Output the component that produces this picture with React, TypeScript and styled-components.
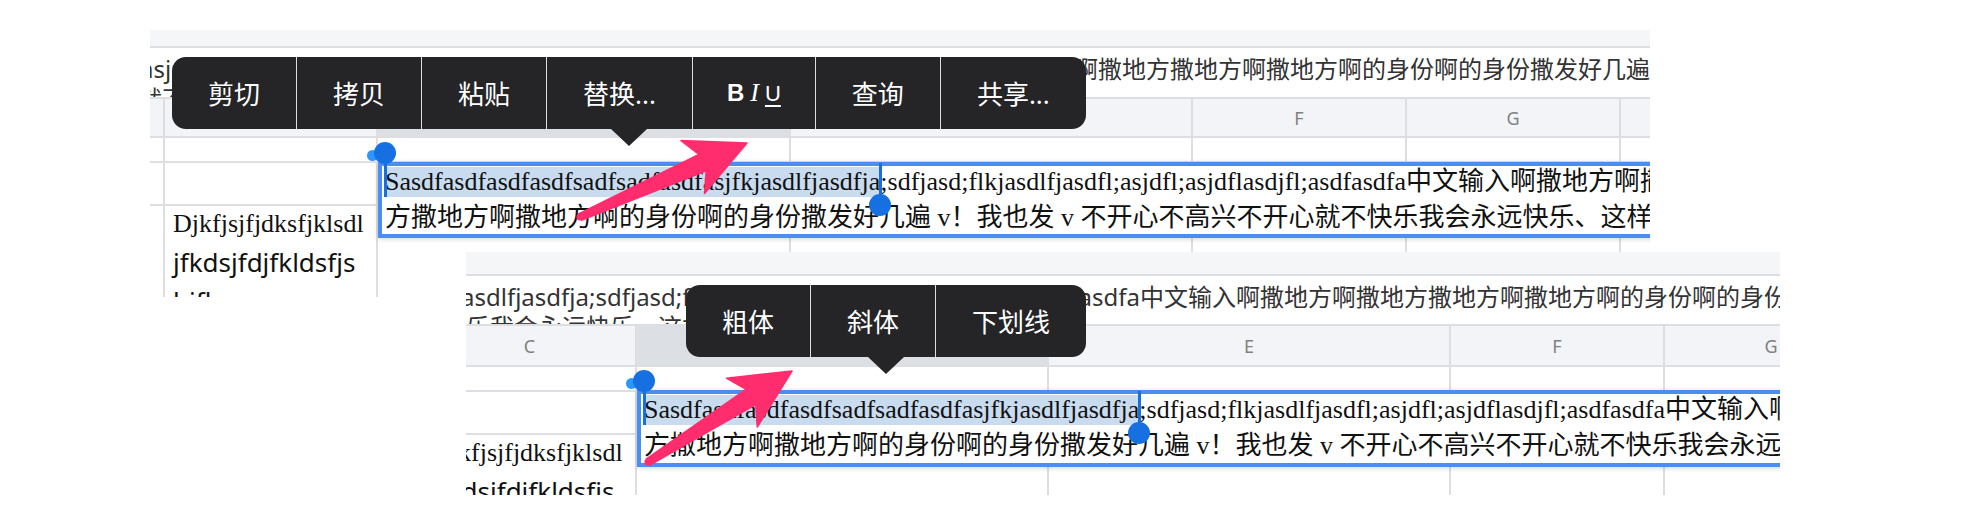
import styled, { createGlobalStyle } from "styled-components";

const GlobalStyle = createGlobalStyle`
  html, body {
    margin: 0;
    padding: 0;
    background: #fff;
  }
  body {
    font-family: "Noto Sans", "Noto Sans CJK SC", sans-serif;
  }
`;

const LINE = "#dcdee2";

type Col = { label: string; width: number; active?: boolean };

type ShotProps = {
  x: number;
  y: number;
  w: number;
  h: number;
  stripH: number;
  barH: number;
  headH: number;
  offset: number;
  cols: Col[];
  bar: { left: string; right?: string; indent: number; second: string; secondIndent: number };
  editor: { x: number; y: number; h: number };
  menu: { x: number; y: number; items: string[] };
};

const cellText = {
  first: "Djkfjsjfjdksfjklsdl",
  second: "jfkdsjfdjfkldsfjs",
  third: "bjfl",
};

const selected = "Sasdfasdfasdfasdfsadfsadfasdfasjfkjasdlfjasdfja";
const afterSel =
  ";sdfjasd;flkjasdlfjasdfl;asjdfl;asjdflasdjfl;asdfasdfa中文输入啊撒地方啊撒地方撒地方啊撒地方";
const line2 =
  "方撒地方啊撒地方啊的身份啊的身份撒发好几遍 v！我也发 v 不开心不高兴不开心就不快乐我会永远快乐、这样的日子";

const shots: ShotProps[] = [
  {
    x: 150,
    y: 30,
    w: 1500,
    h: 267,
    stripH: 16,
    barH: 49,
    headH: 41,
    offset: -25,
    cols: [
      { label: "", width: 40 },
      { label: "C", width: 213 },
      { label: "D", width: 413, active: true },
      { label: "E", width: 402 },
      { label: "F", width: 214 },
      { label: "G", width: 214 },
      { label: "H", width: 214 },
    ],
    bar: {
      left: "asj",
      right: "中文输入啊撒地方啊撒地方撒地方啊撒地方啊的身份啊的身份撒发好几遍",
      indent: -10,
      second: "就不快乐我会永远快乐、这样",
      secondIndent: -12,
    },
    editor: { x: 228, y: 132, h: 76 },
    menu: { x: 22, y: 27, items: ["剪切", "拷贝", "粘贴", "替换...", "BIU", "查询", "共享..."] },
  },
  {
    x: 466,
    y: 252,
    w: 1314,
    h: 243,
    stripH: 22,
    barH: 48,
    headH: 43,
    offset: -42,
    cols: [
      { label: "C", width: 213 },
      { label: "D", width: 412, active: true },
      { label: "E", width: 402 },
      { label: "F", width: 214 },
      { label: "G", width: 214 },
    ],
    bar: {
      left: "asdlfjasdfja;sdfjasd;flkjasdlfjasdfl;asjdfl;asjdflasdjfl;asdfasdfa中文输入啊撒地方啊撒地方撒地方啊撒地方啊的身份啊的身份撒发好几遍",
      indent: -5,
      second: "乐我会永远快乐、这样的日子",
      secondIndent: 0,
    },
    editor: { x: 171, y: 138, h: 77 },
    menu: { x: 220, y: 33, items: ["粗体", "斜体", "下划线"] },
  },
];

type Pt = [number, number];

function arrowPoints(tail: Pt, tip: Pt) {
  const dx = tip[0] - tail[0];
  const dy = tip[1] - tail[1];
  const len = Math.hypot(dx, dy);
  const ux = dx / len;
  const uy = dy / len;
  const nx = -uy;
  const ny = ux;
  const headLen = 66;
  const ang = (26 * Math.PI) / 180;
  const hb = headLen * Math.cos(ang);
  const hw = headLen * Math.sin(ang);
  const bx = tip[0] - ux * hb;
  const by = tip[1] - uy * hb;
  const kx = tip[0] - ux * hb * 0.82;
  const ky = tip[1] - uy * hb * 0.82;
  const pts: Pt[] = [
    [tail[0] + nx * 3.5, tail[1] + ny * 3.5],
    [kx + nx * 9, ky + ny * 9],
    [bx + nx * hw, by + ny * hw],
    tip,
    [bx - nx * hw, by - ny * hw],
    [kx - nx * 9, ky - ny * 9],
    [tail[0] - nx * 3.5, tail[1] - ny * 3.5],
  ];
  return pts.map((p) => `${p[0].toFixed(1)},${p[1].toFixed(1)}`).join(" ");
}

const arrows: { tail: Pt; tip: Pt }[] = [
  { tail: [580, 217], tip: [747, 143] },
  { tail: [648, 462], tip: [792, 371] },
];

export default function App() {
  return (
    <>
      <GlobalStyle />
      <Canvas>
        {shots.map((s, i) => (
          <Shot key={i} $x={s.x} $y={s.y} $w={s.w} $h={s.h}>
            <Strip $h={s.stripH} />
            <Bar $h={s.barH}>
              <BarLine $indent={s.bar.indent} $split={!!s.bar.right}>
                <span>{s.bar.left}</span>
                {s.bar.right && <span>{s.bar.right}</span>}
              </BarLine>
              <BarLine $indent={s.bar.secondIndent}>
                <span>{s.bar.second}</span>
              </BarLine>
            </Bar>
            <Sheet $offset={s.offset}>
              <HeadRow $h={s.headH}>
                {s.cols.map((c) => (
                  <HeadCell key={c.label || "n"} $w={c.width} $active={!!c.active}>
                    {c.label}
                  </HeadCell>
                ))}
              </HeadRow>
              <Row $h={25}>
                {s.cols.map((c) => (
                  <Cell key={c.label || "n"} $w={c.width} />
                ))}
              </Row>
              <Row $h={43}>
                {s.cols.map((c) => (
                  <Cell key={c.label || "n"} $w={c.width} />
                ))}
              </Row>
              <Row $last>
                {s.cols.map((c) => (
                  <Cell key={c.label || "n"} $w={c.width}>
                    {c.label === "C" && (
                      <>
                        <SerifLine>{cellText.first}</SerifLine>
                        <SansLine>{cellText.second}</SansLine>
                        <SansLine>{cellText.third}</SansLine>
                      </>
                    )}
                  </Cell>
                ))}
              </Row>
            </Sheet>

            <Editor $x={s.editor.x} $y={s.editor.y} $h={s.editor.h}>
              <EditLine1>
                <Selection>
                  {selected}
                  <SmallDot />
                  <StartStem />
                  <StartDot />
                  <EndStem />
                  <EndDot />
                </Selection>
                <Rest>{afterSel}</Rest>
              </EditLine1>
              <EditLine2>{line2}</EditLine2>
            </Editor>

            <Menu $x={s.menu.x} $y={s.menu.y}>
              {s.menu.items.map((item) => (
                <MenuItem key={item}>
                  {item === "BIU" ? (
                    <Biu>
                      <b>B</b>
                      <i>I</i>
                      <u>U</u>
                    </Biu>
                  ) : (
                    item
                  )}
                </MenuItem>
              ))}
              <MenuTip />
            </Menu>
          </Shot>
        ))}

        <ArrowLayer width="1962" height="528" viewBox="0 0 1962 528">
          {arrows.map((a, i) => (
            <g key={i} fill="#ff2d6d">
              <polygon points={arrowPoints(a.tail, a.tip)} strokeLinejoin="round" stroke="#ff2d6d" strokeWidth="1.5" />
              <circle cx={a.tail[0]} cy={a.tail[1]} r="3.6" />
            </g>
          ))}
        </ArrowLayer>
      </Canvas>
    </>
  );
}

const Canvas = styled.div`
  position: relative;
  width: 1962px;
  height: 528px;
  overflow: hidden;
  background: #fff;
`;

const Shot = styled.div<{ $x: number; $y: number; $w: number; $h: number }>`
  position: absolute;
  left: ${(p) => p.$x}px;
  top: ${(p) => p.$y}px;
  width: ${(p) => p.$w}px;
  height: ${(p) => p.$h}px;
  overflow: hidden;
  background: #fff;
  display: flex;
  flex-direction: column;
`;

const Strip = styled.div<{ $h: number }>`
  flex: none;
  height: ${(p) => p.$h}px;
  background: #f5f6f8;
  border-bottom: 2px solid ${LINE};
`;

const Bar = styled.div<{ $h: number }>`
  flex: none;
  height: ${(p) => p.$h}px;
  box-sizing: border-box;
  padding-top: 6px;
  overflow: hidden;
  font-family: "Noto Sans", "Noto Sans CJK SC", sans-serif;
  font-size: 24px;
  line-height: 30px;
  color: #333;
`;

const BarLine = styled.div<{ $indent: number; $split?: boolean }>`
  display: flex;
  justify-content: ${(p) => (p.$split ? "space-between" : "flex-start")};
  margin-left: ${(p) => p.$indent}px;
  white-space: nowrap;

  span {
    flex: none;
  }
`;

const Sheet = styled.div<{ $offset: number }>`
  flex: 1;
  display: flex;
  flex-direction: column;
  margin-left: ${(p) => p.$offset}px;
  min-height: 0;
`;

const HeadRow = styled.div<{ $h: number }>`
  flex: none;
  display: flex;
  height: ${(p) => p.$h}px;
  box-sizing: border-box;
  border-top: 2px solid ${LINE};
  border-bottom: 2px solid ${LINE};
  background: #f2f4f7;
`;

const HeadCell = styled.div<{ $w: number; $active: boolean }>`
  flex: none;
  width: ${(p) => p.$w}px;
  box-sizing: border-box;
  border-right: 2px solid ${LINE};
  background: ${(p) => (p.$active ? "#dcdfe4" : "transparent")};
  display: flex;
  align-items: center;
  justify-content: center;
  font-family: "Noto Sans", sans-serif;
  font-size: 18px;
  color: #808080;
`;

const Row = styled.div<{ $h?: number; $last?: boolean }>`
  display: flex;
  flex: ${(p) => (p.$last ? "1" : "none")};
  height: ${(p) => (p.$h ? `${p.$h}px` : "auto")};
  box-sizing: border-box;
  border-bottom: ${(p) => (p.$last ? "none" : `2px solid ${LINE}`)};
`;

const Cell = styled.div<{ $w: number }>`
  flex: none;
  width: ${(p) => p.$w}px;
  box-sizing: border-box;
  border-right: 2px solid ${LINE};
  padding: 0 8px;
  overflow: hidden;
  color: #111;
`;

const SerifLine = styled.div`
  margin-top: -2px;
  font-family: "Liberation Serif", serif;
  font-size: 26px;
  line-height: 39px;
  white-space: nowrap;
`;

const SansLine = styled.div`
  font-family: "Noto Sans", sans-serif;
  font-size: 26px;
  line-height: 39px;
  white-space: nowrap;
`;

const Editor = styled.div<{ $x: number; $y: number; $h: number }>`
  position: absolute;
  left: ${(p) => p.$x}px;
  top: ${(p) => p.$y}px;
  width: 2200px;
  height: ${(p) => p.$h}px;
  box-sizing: border-box;
  border: 4px solid #4b8df0;
  background: #fff;
  box-shadow: 0 1px 5px rgba(0, 0, 0, 0.18);
  padding-left: 3px;
  font-family: "Liberation Serif", "Noto Sans CJK SC", serif;
  font-size: 26px;
  color: #111;
`;

const EditLine1 = styled.div`
  height: 36px;
  box-sizing: border-box;
  padding-top: 1px;
  display: flex;
  align-items: flex-start;
  white-space: nowrap;
`;

const Selection = styled.span`
  position: relative;
  display: inline-block;
  height: 30px;
  line-height: 30px;
  background: #c8dbef;
`;

const Rest = styled.span`
  display: inline-block;
  line-height: 30px;
`;

const EditLine2 = styled.div`
  line-height: 32px;
  white-space: nowrap;
`;

const Knob = styled.span`
  position: absolute;
  background: #1670e2;
`;

const StartStem = styled(Knob)`
  left: -1.5px;
  top: -16px;
  width: 3px;
  height: 46px;
`;

const StartDot = styled(Knob)`
  left: -11px;
  top: -25px;
  width: 22px;
  height: 22px;
  border-radius: 50%;
`;

const SmallDot = styled(Knob)`
  left: -18px;
  top: -17px;
  width: 11px;
  height: 11px;
  border-radius: 50%;
  background: #2a98ff;
`;

const EndStem = styled(Knob)`
  right: -1.5px;
  top: -4px;
  width: 3px;
  height: 40px;
`;

const EndDot = styled(Knob)`
  right: -11px;
  top: 27px;
  width: 22px;
  height: 22px;
  border-radius: 50%;
`;

const Menu = styled.div<{ $x: number; $y: number }>`
  position: absolute;
  left: ${(p) => p.$x}px;
  top: ${(p) => p.$y}px;
  height: 72px;
  display: flex;
  background: #252527;
  border-radius: 14px;
  z-index: 5;
`;

const MenuItem = styled.div`
  display: flex;
  align-items: center;
  padding: 0 36px;
  font-family: "Noto Sans", "Noto Sans CJK SC", sans-serif;
  font-size: 26px;
  color: #fff;
  white-space: nowrap;

  & + & {
    border-left: 1px solid rgba(255, 255, 255, 0.85);
  }
`;

const Biu = styled.span`
  display: flex;
  align-items: baseline;
  gap: 6px;
  margin: 0 -2px;

  b {
    font-family: "Liberation Sans", sans-serif;
    font-weight: 700;
    font-size: 24px;
  }

  i {
    font-family: "Liberation Serif", serif;
    font-size: 26px;
  }

  u {
    font-family: "Liberation Sans", sans-serif;
    font-size: 22px;
    text-underline-offset: 4px;
    text-decoration-thickness: 2px;
  }
`;

const MenuTip = styled.span`
  position: absolute;
  top: 100%;
  left: 50%;
  transform: translateX(-50%);
  width: 0;
  height: 0;
  border-left: 18px solid transparent;
  border-right: 18px solid transparent;
  border-top: 17px solid #252527;
`;

const ArrowLayer = styled.svg`
  position: absolute;
  left: 0;
  top: 0;
  pointer-events: none;
  z-index: 10;
`;
